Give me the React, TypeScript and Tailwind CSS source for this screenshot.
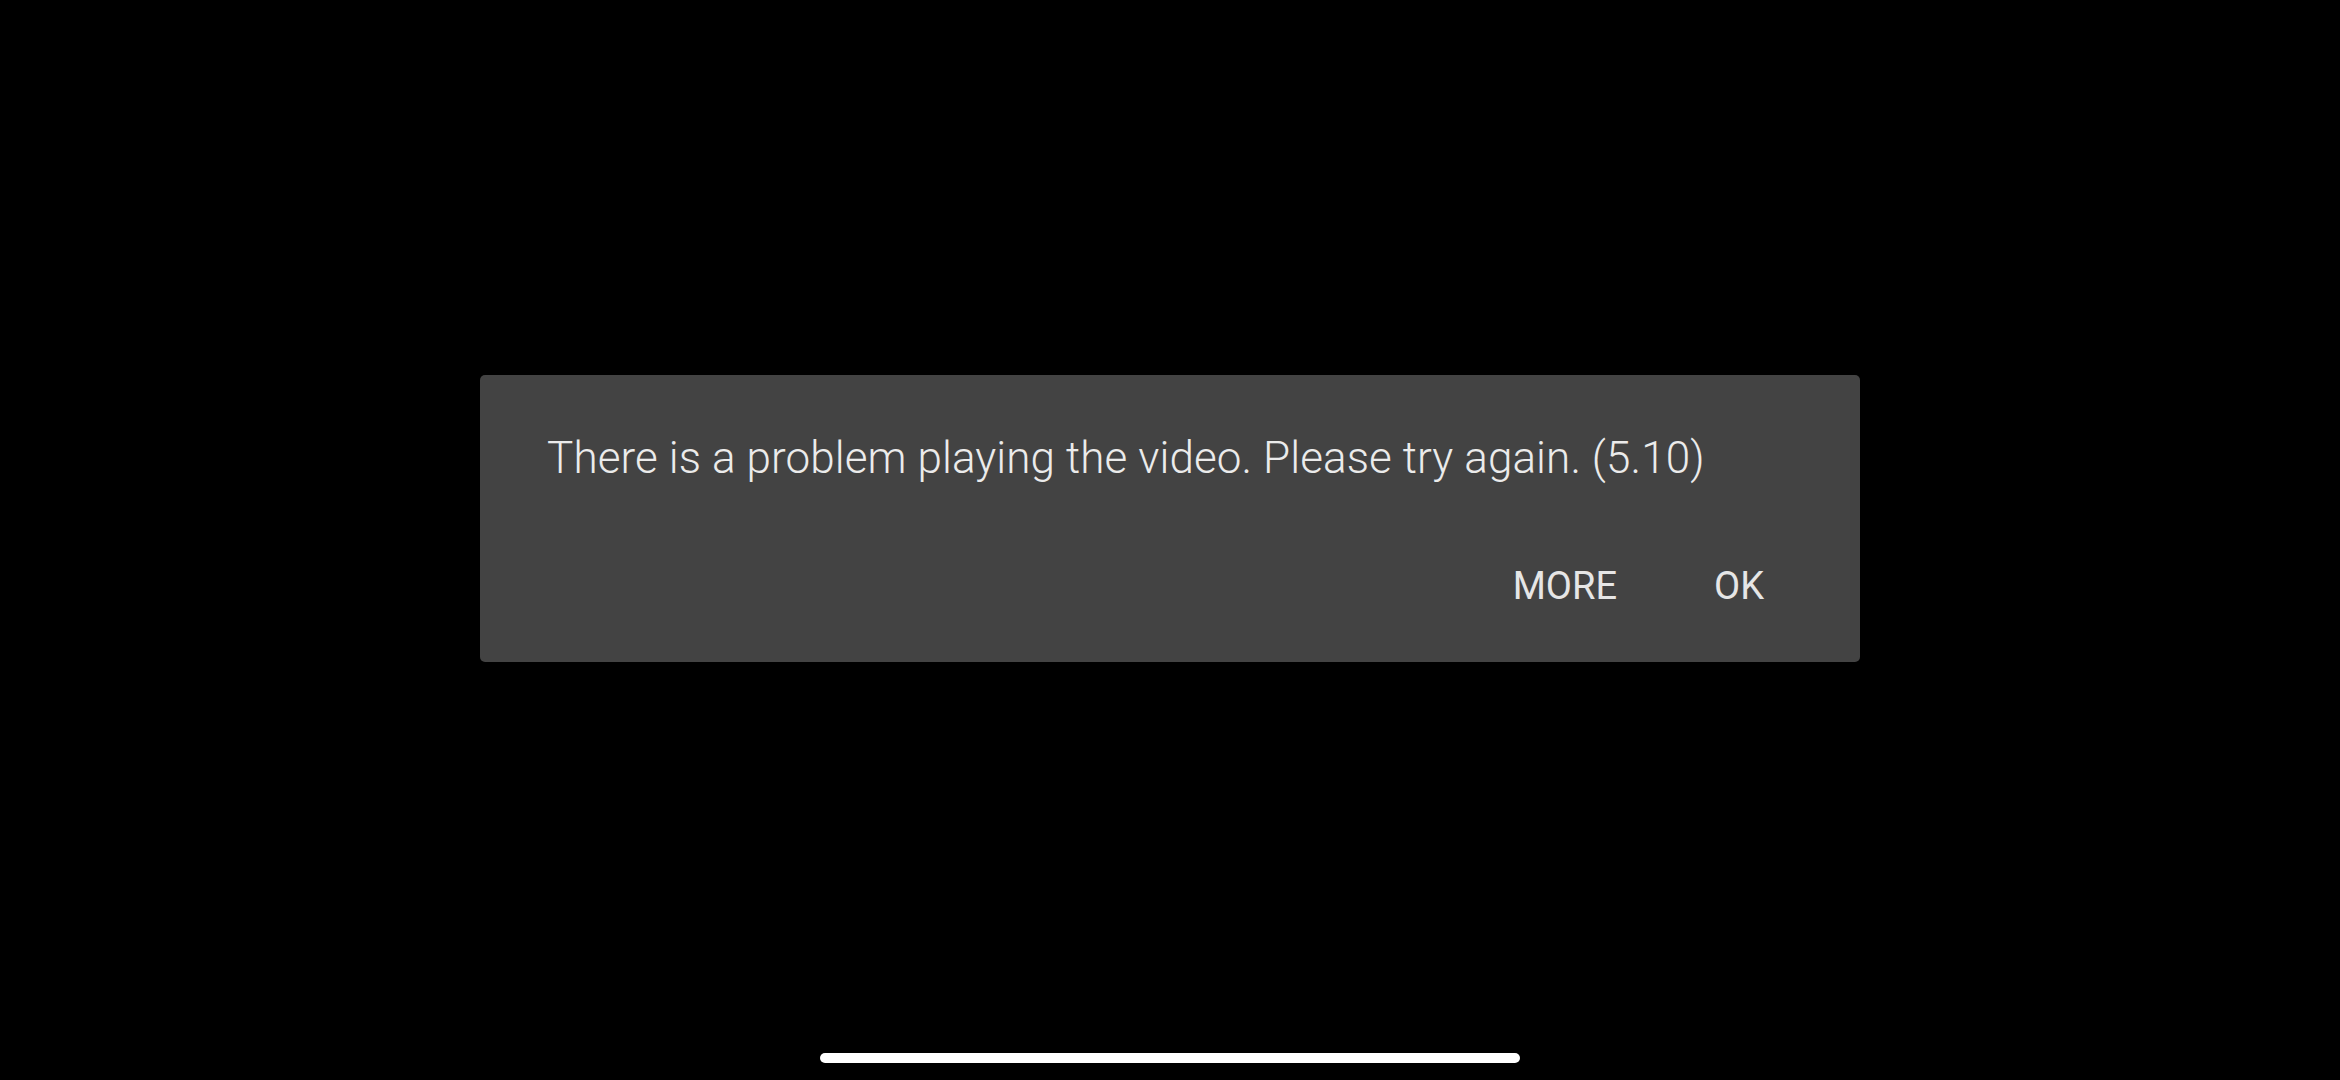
import React from 'react';

const ErrorDialog = () => {
  return (
    <div className="w-[1380px] rounded-[5px] bg-[#434343] pt-[55px] pb-[54px] pl-[67px] pr-[96px]">
      <p className="text-[44px] leading-[56px] font-light text-[#ebebeb] tracking-[0.1px]">
        There is a problem playing the video. Please try again. (5.10)
      </p>
      <div className="mt-[78px] flex justify-end gap-[97px]">
        <button className="text-[38px] leading-[44px] text-[#e6e6e6] uppercase">More</button>
        <button className="text-[38px] leading-[44px] text-[#e6e6e6] uppercase">OK</button>
      </div>
    </div>
  );
};

export default function App() {
  return (
    <div
      className="w-[2340px] h-[1080px] bg-black flex flex-col items-center overflow-hidden"
      style={{ fontFamily: 'Roboto, "Noto Sans", sans-serif' }}
    >
      <div className="pt-[375px]">
        <ErrorDialog />
      </div>
      <div className="flex-1" />
      <div className="w-[700px] h-[10px] rounded-full bg-white mb-[17px]" />
    </div>
  );
}
